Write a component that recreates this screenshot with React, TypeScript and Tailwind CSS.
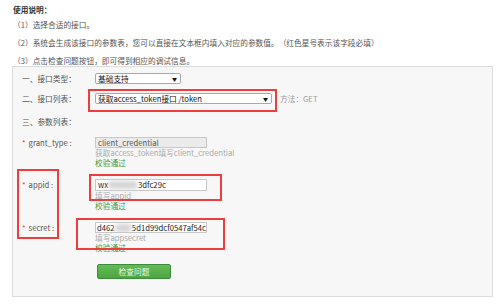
const font = { fontFamily: '"Noto Sans CJK SC", "Noto Sans", sans-serif' };

function Blur({ w }: { w: string }) {
  return <span className={`inline-block h-[8px] ${w} rounded-full bg-[#d4d4d4] blur-[2px] align-middle`} />;
}

function Label({ children, required }: { children: React.ReactNode; required?: boolean }) {
  return (
    <div className="w-[73px] shrink-0 text-[#555]">
      {required && <span className="mr-[3px] text-[#e33]">*</span>}
      {children}
    </div>
  );
}

function Select({ value, width }: { value: string; width: string }) {
  return (
    <div
      className={`flex h-[11px] ${width} items-center justify-between rounded-[2px] border border-[#a9a9a9] bg-white pl-[2px] pr-[3px] text-[#111]`}
    >
      <span>{value}</span>
      <span className="text-[5px]">▼</span>
    </div>
  );
}

export default function App() {
  return (
    <div
      className="relative h-[304px] w-[500px] overflow-hidden bg-white text-[7.7px] leading-[10px] [text-spacing-trim:space-all]"
      style={font}
    >
      <div className="pl-[13px] pt-[5px] text-[#555]">
        <div className="font-bold text-[#333]">使用说明：</div>
        <div className="mt-[5px]">（1）选择合适的接口。</div>
        <div className="mt-[8px]">（2）系统会生成该接口的参数表，您可以直接在文本框内填入对应的参数值。（红色星号表示该字段必填）</div>
        <div className="mt-[8px]">（3）点击检查问题按钮，即可得到相应的调试信息。</div>
      </div>

      <div className="ml-[12px] h-[231px] w-[481px] border border-[#dcdcdc] bg-[#f7f7f7] pl-[9px]">
        <div className="mt-[6px] flex h-[11px] items-center">
          <Label>一、接口类型：</Label>
          <Select value="基础支持" width="w-[86px]" />
        </div>

        <div className="mt-[9px] flex h-[11px] items-center">
          <Label>二、接口列表：</Label>
          <Select value="获取access_token接口 /token" width="w-[177px]" />
          <span className="ml-[8px] text-[#999]">方法：GET</span>
        </div>

        <div className="mt-[12px] flex h-[11px] items-center">
          <Label>三、参数列表：</Label>
        </div>

        <div className="mt-[10px] flex">
          <Label required>
            <span className="leading-[11px]">grant_type :</span>
          </Label>
          <div>
            <div className="flex h-[11px] w-[112px] items-center border border-[#c8c8c8] bg-[#ebebeb] pl-[2px] text-[#555]">
              client_credential
            </div>
            <div className="text-[#aaa]">获取access_token填写client_credential</div>
            <div className="text-[#3c9a3c]">校验通过</div>
          </div>
        </div>

        <div className="mt-[11px] flex">
          <Label required>
            <span className="leading-[12px]">appid :</span>
          </Label>
          <div>
            <div className="flex h-[12px] w-[112px] items-center border border-[#c8c8c8] bg-white pl-[2px] text-[#222]">
              wx
              <Blur w="w-[30px]" />
              3dfc29c
            </div>
            <div className="text-[#aaa]">填写appid</div>
            <div className="text-[#3c9a3c]">校验通过</div>
          </div>
        </div>

        <div className="mt-[11px] flex">
          <Label required>
            <span className="leading-[11px]">secret :</span>
          </Label>
          <div>
            <div className="flex h-[11px] w-[112px] items-center overflow-hidden whitespace-nowrap border border-[#c8c8c8] bg-white pl-[1px] text-[#222]">
              d462
              <Blur w="w-[22px]" />
              5d1d99dcf0547af54c
            </div>
            <div className="text-[#aaa]">填写appsecret</div>
            <div className="text-[#3c9a3c]">校验通过</div>
          </div>
        </div>

        <div className="mt-[11px] flex">
          <div className="w-[75px] shrink-0" />
          <button className="h-[15px] w-[74px] rounded-[2px] border border-[#3d8b3d] bg-gradient-to-b from-[#62bb55] to-[#4ea542] text-[#eaf6e8]">
            检查问题
          </button>
        </div>
      </div>

      {/* red annotation boxes */}
      <div className="absolute left-[88px] top-[89px] h-[23px] w-[189px] border-2 border-[#ee3d3d]" />
      <div className="absolute left-[17px] top-[169px] h-[70px] w-[42px] border-2 border-[#ee3d3d]" />
      <div className="absolute left-[89px] top-[174px] h-[27px] w-[133px] border-2 border-[#ee3d3d]" />
      <div className="absolute left-[76px] top-[218px] h-[32px] w-[149px] border-2 border-[#ee3d3d]" />
    </div>
  );
}
